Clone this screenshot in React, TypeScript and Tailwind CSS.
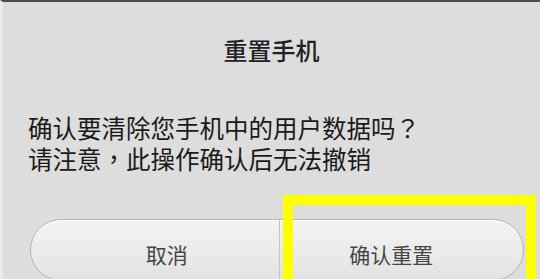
export default function App() {
  const punct = "font-['Noto_Sans_CJK_TC'] leading-none";

  return (
    <div
      className="relative h-[279px] w-[540px] overflow-hidden border-t-2 border-l-[3px] border-t-[#4d4d4d] border-l-[#ebebeb] bg-[#dddddd] text-[#1a1a1a]"
      style={{ fontFamily: '"Noto Sans CJK SC", "Noto Sans", sans-serif' }}
    >
      <div className="flex flex-col">
        <h1 className="pt-9 text-center text-[24px] leading-none font-medium text-[#222]">重置手机</h1>

        <div className="mt-[50px] pl-[25px] text-[24.5px] leading-[31px]">
          <p>
            确认要清除您手机中的用户数据吗<span className={punct}>？</span>
          </p>
          <p>
            请注意<span className={punct}>，</span>此操作确认后无法撤销
          </p>
        </div>

        <div className="mt-[45px] ml-[27px] flex h-[62px] w-[494px] overflow-hidden rounded-full border border-[#b5b5b5] bg-gradient-to-b from-[#f4f4f4] to-[#e2e2e2] shadow-[inset_0_1px_0_#ffffff]">
          <button type="button" className="flex flex-1 items-center justify-center pt-[10px] pl-6 text-[21px] text-[#454545]">
            取消
          </button>
          <div className="w-px bg-[#c4c4c4]" />
          <button type="button" className="flex flex-1 items-center justify-center pt-[10px] pr-5 text-[21px] text-[#454545]">
            确认重置
          </button>
        </div>
      </div>

      {/* highlight box drawn over the confirm button */}
      <div className="pointer-events-none absolute top-[193px] left-[280px] h-[110px] w-[253px] border-[10px] border-[#ffff00] blur-[0.4px]" />
    </div>
  );
}
